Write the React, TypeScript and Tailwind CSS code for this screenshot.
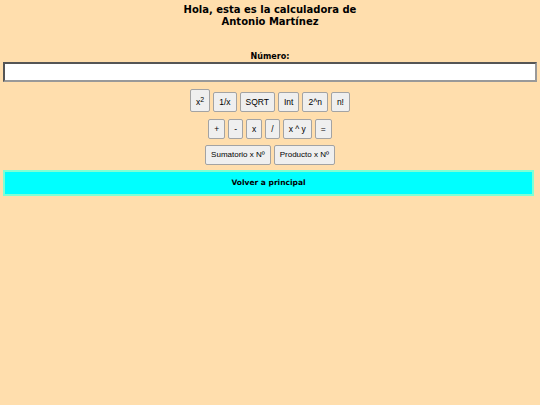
import React from "react"

const base =
  "rounded-[2px] border border-[#a3a3a3] bg-[#efefef] px-[5px] font-['Liberation_Sans',Arial,sans-serif] leading-[8px] text-black"

const Btn = ({ children, tall, small }: { children: React.ReactNode; tall?: boolean; small?: boolean }) => (
  <button className={`${base} ${tall ? "pt-[8px] pb-[5px]" : "py-[5px]"} ${small ? "text-[8px]" : "text-[8.5px]"}`}>
    {children}
  </button>
)

export default function App() {
  const row2 = ["+", "-", "x", "/", "x ^ y", "="]

  return (
    <div className="min-h-[405px] bg-[#ffdead] px-[3px] pt-[4px] font-['DejaVu_Sans',Verdana,sans-serif] text-black">
      <h1 className="text-center text-[10px] font-bold leading-[12px]">
        Hola, esta es la calculadora de
        <br />
        Antonio Martínez
      </h1>

      <label className="mt-[24px] block text-center text-[8px] font-bold leading-[10px]">Número:</label>
      <input
        type="text"
        className="block h-[20px] w-[534px] border-2 border-t-[#555] border-l-[#555] border-b-[#999] border-r-[#999] bg-white outline-none"
      />

      <div className="mt-[7px] flex items-baseline justify-center gap-[3px]">
        <Btn tall>
          x<sup className="text-[7px]">2</sup>
        </Btn>
        <Btn>1/x</Btn>
        <Btn>SQRT</Btn>
        <Btn>Int</Btn>
        <Btn>2^n</Btn>
        <Btn>n!</Btn>
      </div>

      <div className="mt-[7px] flex justify-center gap-[3px]">
        {row2.map((b) => (
          <Btn key={b}>{b}</Btn>
        ))}
      </div>

      <div className="mt-[6px] flex justify-center gap-[3px]">
        <Btn small>Sumatorio x Nº</Btn>
        <Btn small>Producto x Nº</Btn>
      </div>

      <button className="mt-[5px] block h-[26px] w-[531px] border-2 border-[#7fffd4] bg-[#00ffff] text-center text-[7.5px] font-bold leading-[10px]">
        Volver a principal
      </button>
    </div>
  )
}
